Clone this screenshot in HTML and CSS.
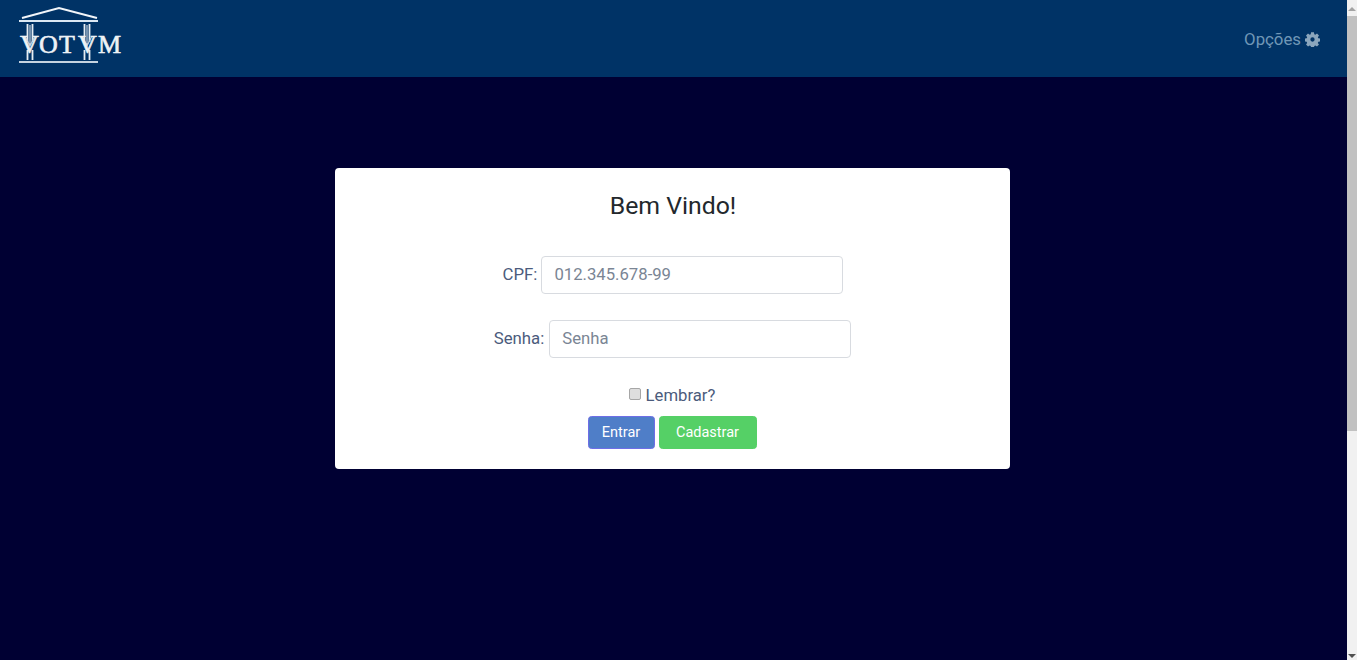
FILE: index.html
```html
<!DOCTYPE html>
<html lang="pt-BR">
<head>
<meta charset="utf-8">
<title>Votum</title>
<link rel="stylesheet" href="styles.css">
</head>
<body>
<div class="page">
  <div class="main">
    <header class="navbar">
      <a class="brand" href="#" aria-label="Votum">
        <svg class="logo" width="126" height="77" viewBox="0 0 126 77">
          <path class="roof" d="M22 18 L59 8 L97 18" />
          <path class="beam" d="M19 21 H98" />
          <path class="col" d="M27.500 24 V42 M32.500 24 V42 M84.500 24 V42 M89.500 24 V42 M27.500 50 V60 M32.500 50 V60 M84.500 50 V60 M89.500 50 V60" />
          <path class="arrow" d="M30 25 V46 M87 25 V46 M25.500 37 L30 46 L34.500 37 M82.500 37 L87 46 L91.500 37" />
          <text class="logo-text" x="20 39 59 78 98" y="53">VOTVM</text>
          <path class="base" d="M19 62 H98" />
        </svg>
      </a>
      <a class="options" href="#">Opções
        <svg class="gear" width="15" height="15" viewBox="0 0 16 16">
          <path d="M6.500 0.300h3l.4 2.100 1.100.5 1.800-1.200 2.100 2.100-1.200 1.800.5 1.100 2.100.4v3l-2.100.4-.5 1.100 1.200 1.800-2.100 2.100-1.800-1.200-1.100.5-.4 2.100h-3l-.4-2.100-1.100-.5-1.800 1.200-2.100-2.100 1.200-1.800-.5-1.100-2.100-.4v-3l2.100-.4.5-1.100-1.200-1.800 2.100-2.100 1.800 1.200 1.100-.5z M8 5.700a2.300 2.300 0 1 0 0 4.600 2.300 2.300 0 0 0 0-4.600z" fill-rule="evenodd"/>
        </svg>
      </a>
    </header>
    <main class="content">
      <form class="card">
        <h1 class="title">Bem Vindo!</h1>
        <div class="field field-cpf">
          <label class="label" for="cpf">CPF:</label>
          <input class="input" id="cpf" type="text" placeholder="012.345.678-99">
        </div>
        <div class="field field-senha">
          <label class="label" for="senha">Senha:</label>
          <input class="input" id="senha" type="password" placeholder="Senha">
        </div>
        <div class="remember">
          <input class="check" id="lembrar" type="checkbox">
          <label for="lembrar">Lembrar?</label>
        </div>
        <div class="actions">
          <button class="btn btn-blue" type="button">Entrar</button>
          <button class="btn btn-green" type="button">Cadastrar</button>
        </div>
      </form>
    </main>
  </div>
  <div class="scrollbar" aria-hidden="true">
    <span class="arrow-up"></span>
    <span class="thumb"></span>
    <span class="track"></span>
    <span class="arrow-down"></span>
  </div>
</div>
</body>
</html>
```
FILE: styles.css
```css
* { box-sizing: border-box; }
html, body { margin: 0; height: 100%; overflow: hidden; }
body { font-family: Roboto, "Liberation Sans", sans-serif; font-size: 16px; color: #4b5b7c; background: #000033; }
.page { display: flex; height: 660px; }
.main { flex: 1; min-width: 0; display: flex; flex-direction: column; background: #000033; }
.navbar { height: 77px; background: #003366; display: flex; align-items: center; justify-content: space-between; padding: 0 27px 0 0; }
.brand { display: block; height: 77px; }
.logo { display: block; }
.roof { fill: none; stroke: #f2f6fa; stroke-width: 2; }
.beam { fill: none; stroke: #dbe8f3; stroke-width: 2; }
.col { fill: none; stroke: #e6edf3; stroke-width: 1.800; }
.arrow { fill: none; stroke: #c3d2df; stroke-width: 1.200; }
.base { fill: none; stroke: #c5d3e0; stroke-width: 2; }
.logo-text { font-family: "Liberation Serif", serif; font-size: 26px; font-weight: 400; fill: #eef2f6; stroke: #eef2f6; stroke-width: .6; }
.options { display: flex; align-items: center; gap: 4px; color: #7097b6; text-decoration: none; font-size: 16.800px; margin-top: 1px; }
.gear { fill: #8ba6bd; display: block; }
.content { flex: 1; display: flex; justify-content: center; align-items: flex-start; padding: 91px 3px 0 0; }
.card { width: 675px; height: 301px; background: #fff; border-radius: 4px; display: flex; flex-direction: column; align-items: center; }
.title { margin: 22px 0 0 2px; height: 32px; line-height: 32px; font-size: 24.800px; font-weight: 400; color: #23282c; }
.field { display: flex; align-items: center; gap: 4px; color: #4b5b7c; margin-left: 2px; }
.field-cpf { margin-top: 34px; }
.field-senha { margin-top: 26px; margin-left: 1px; gap: 5px; }
.label { font-size: 16.800px; margin-bottom: 2px; }
.input { width: 302px; height: 38px; padding: 5px 12px 7px; border: 1px solid #d8dbe0; border-radius: 4px; font: inherit; font-size: 16.700px; color: #495057; background: #fff; outline: none; }
.input::placeholder { color: #7a8594; opacity: 1; }
.remember { display: flex; align-items: center; gap: 5px; margin-top: 27px; height: 20px; font-size: 16.700px; color: #4b5b7c; }
.check { appearance: none; margin: 0 0 2px; width: 12px; height: 12px; background: #dedede; border: 1px solid #a6a6a6; border-radius: 2px; }
.actions { display: flex; gap: 4px; margin-top: 11px; }
.btn { height: 33px; padding: 0 13px; border-radius: 3.500px; border: 1px solid transparent; color: #fff; font: inherit; font-size: 14.500px; font-weight: 400; }
.btn-blue { width: 67px; background: #4f7ec8; border-color: #6e6ee6; }
.btn-green { width: 98px; background: #55d066; border-color: #55d066; }
.scrollbar { width: 10px; flex: none; display: flex; flex-direction: column; align-items: center; background: #f1f1f1; }
.thumb { width: 100%; height: 415px; background: #c1c1c1; }
.track { flex: 1; }
.arrow-up, .arrow-down { flex: none; width: 0; height: 0; border-left: 4px solid transparent; border-right: 4px solid transparent; }
.arrow-up { margin: 7px 0 5px; border-bottom: 4px solid #a3a3a3; }
.arrow-down { margin: 0 0 2px; border-top: 4px solid #505050; }
```
